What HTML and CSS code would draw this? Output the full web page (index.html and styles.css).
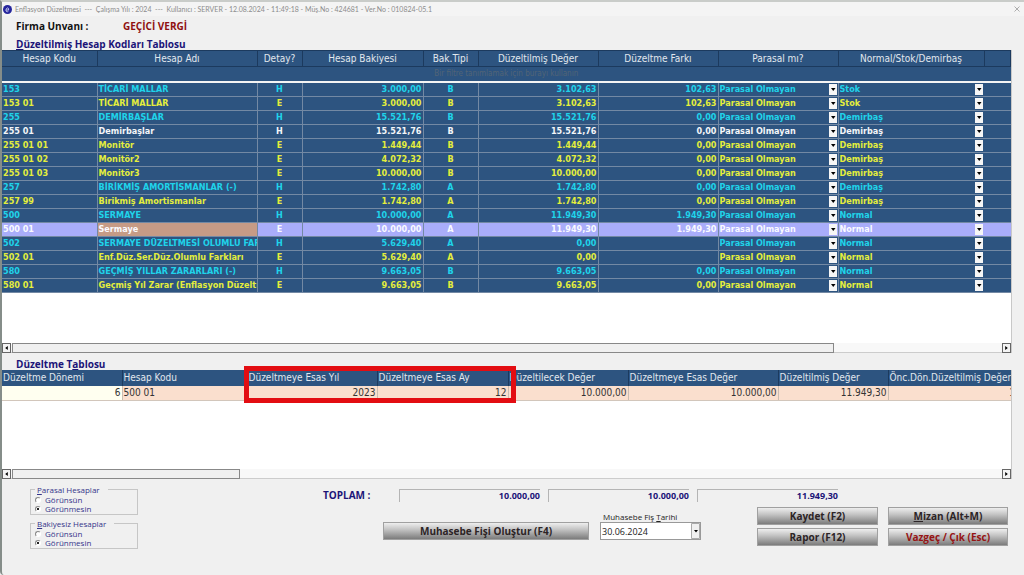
FILE: index.html
```html
<!DOCTYPE html>
<html lang="tr">
<head>
<meta charset="utf-8">
<title>Enflasyon Düzeltmesi</title>
<link rel="stylesheet" href="styles.css">
</head>
<body>
<main class="window">
  <header class="titlebar">
    <svg class="app-icon" viewBox="0 0 18 18" aria-hidden="true"><circle cx="9" cy="9" r="9" fill="#25259c"/><path d="M6 10h5c1-3-1-5-3-4s-3 6-1 7 3 0 4-1" fill="none" stroke="#dfe3ff" stroke-width="1.6"/></svg>
    <span class="titlebar-text">Enflasyon Düzeltmesi &nbsp;---&nbsp; Çalışma Yılı : 2024 &nbsp;---&nbsp; Kullanıcı : SERVER - 12.08.2024 - 11:49:18 - Müş.No : 424681 - Ver.No : 010824-05.1</span>
    <button class="close" aria-label="Kapat"><svg viewBox="0 0 6 6"><path d="M.5 .5l5 5M5.500 .5l-5 5" stroke="#999" stroke-width=".8"/></svg></button>
  </header>
  <div class="firm"><span class="firm-label">Firma Unvanı :</span><span class="firm-name">GEÇİCİ VERGİ</span></div>

  <h2 class="section-title"><u>D</u>üzeltilmiş Hesap Kodları Tablosu</h2>
  <section class="grid-box grid-accounts">
    <table class="accounts">
      <colgroup><col class="w-code"><col class="w-name"><col class="w-detail"><col class="w-balance"><col class="w-type"><col class="w-value"><col class="w-value"><col class="w-value"><col class="w-kind"><col></colgroup>
      <thead>
        <tr><th>Hesap Kodu</th><th>Hesap Adı</th><th>Detay?</th><th>Hesap Bakiyesi</th><th>Bak.Tipi</th><th>Düzeltilmiş Değer</th><th>Düzeltme Farkı</th><th>Parasal mı?</th><th>Normal/Stok/Demirbaş</th><th></th></tr>
        <tr class="filter"><td colspan="10">Bir filtre tanımlamak için burayı kullanın</td></tr>
      </thead>
      <tbody>
        <tr class="main"><td>153</td><td>TİCARİ MALLAR</td><td>H</td><td>3.000,00</td><td>B</td><td>3.102,63</td><td>102,63</td><td><select aria-label="Parasal mı?"><option>Parasal Olmayan</option></select></td><td><select aria-label="Tür"><option>Stok</option></select></td><td></td></tr>
        <tr class="sub"><td>153 01</td><td>TİCARİ MALLAR</td><td>E</td><td>3.000,00</td><td>B</td><td>3.102,63</td><td>102,63</td><td><select aria-label="Parasal mı?"><option>Parasal Olmayan</option></select></td><td><select aria-label="Tür"><option>Stok</option></select></td><td></td></tr>
        <tr class="main"><td>255</td><td>DEMİRBAŞLAR</td><td>H</td><td>15.521,76</td><td>B</td><td>15.521,76</td><td>0,00</td><td><select aria-label="Parasal mı?"><option>Parasal Olmayan</option></select></td><td><select aria-label="Tür"><option>Demirbaş</option></select></td><td></td></tr>
        <tr class="mid"><td>255 01</td><td>Demirbaşlar</td><td>H</td><td>15.521,76</td><td>B</td><td>15.521,76</td><td>0,00</td><td><select aria-label="Parasal mı?"><option>Parasal Olmayan</option></select></td><td><select aria-label="Tür"><option>Demirbaş</option></select></td><td></td></tr>
        <tr class="sub"><td>255 01 01</td><td>Monitör</td><td>E</td><td>1.449,44</td><td>B</td><td>1.449,44</td><td>0,00</td><td><select aria-label="Parasal mı?"><option>Parasal Olmayan</option></select></td><td><select aria-label="Tür"><option>Demirbaş</option></select></td><td></td></tr>
        <tr class="sub"><td>255 01 02</td><td>Monitör2</td><td>E</td><td>4.072,32</td><td>B</td><td>4.072,32</td><td>0,00</td><td><select aria-label="Parasal mı?"><option>Parasal Olmayan</option></select></td><td><select aria-label="Tür"><option>Demirbaş</option></select></td><td></td></tr>
        <tr class="sub"><td>255 01 03</td><td>Monitör3</td><td>E</td><td>10.000,00</td><td>B</td><td>10.000,00</td><td>0,00</td><td><select aria-label="Parasal mı?"><option>Parasal Olmayan</option></select></td><td><select aria-label="Tür"><option>Demirbaş</option></select></td><td></td></tr>
        <tr class="main"><td>257</td><td>BİRİKMİŞ AMORTİSMANLAR (-)</td><td>H</td><td>1.742,80</td><td>A</td><td>1.742,80</td><td>0,00</td><td><select aria-label="Parasal mı?"><option>Parasal Olmayan</option></select></td><td><select aria-label="Tür"><option>Demirbaş</option></select></td><td></td></tr>
        <tr class="sub"><td>257 99</td><td>Birikmiş Amortismanlar</td><td>E</td><td>1.742,80</td><td>A</td><td>1.742,80</td><td>0,00</td><td><select aria-label="Parasal mı?"><option>Parasal Olmayan</option></select></td><td><select aria-label="Tür"><option>Demirbaş</option></select></td><td></td></tr>
        <tr class="main"><td>500</td><td>SERMAYE</td><td>H</td><td>10.000,00</td><td>A</td><td>11.949,30</td><td>1.949,30</td><td><select aria-label="Parasal mı?"><option>Parasal Olmayan</option></select></td><td><select aria-label="Tür"><option>Normal</option></select></td><td></td></tr>
        <tr class="selected"><td>500 01</td><td class="focused">Sermaye</td><td>E</td><td>10.000,00</td><td>A</td><td>11.949,30</td><td>1.949,30</td><td><select aria-label="Parasal mı?"><option>Parasal Olmayan</option></select></td><td><select aria-label="Tür"><option>Normal</option></select></td><td></td></tr>
        <tr class="main"><td>502</td><td>SERMAYE DÜZELTMESİ OLUMLU FARKLARI</td><td>H</td><td>5.629,40</td><td>A</td><td>0,00</td><td></td><td><select aria-label="Parasal mı?"><option>Parasal Olmayan</option></select></td><td><select aria-label="Tür"><option>Normal</option></select></td><td></td></tr>
        <tr class="sub"><td>502 01</td><td>Enf.Düz.Ser.Düz.Olumlu Farkları</td><td>E</td><td>5.629,40</td><td>A</td><td>0,00</td><td></td><td><select aria-label="Parasal mı?"><option>Parasal Olmayan</option></select></td><td><select aria-label="Tür"><option>Normal</option></select></td><td></td></tr>
        <tr class="main"><td>580</td><td>GEÇMİŞ YILLAR ZARARLARI (-)</td><td>H</td><td>9.663,05</td><td>B</td><td>9.663,05</td><td>0,00</td><td><select aria-label="Parasal mı?"><option>Parasal Olmayan</option></select></td><td><select aria-label="Tür"><option>Normal</option></select></td><td></td></tr>
        <tr class="sub"><td>580 01</td><td>Geçmiş Yıl Zarar (Enflasyon Düzeltmesi)</td><td>E</td><td>9.663,05</td><td>B</td><td>9.663,05</td><td>0,00</td><td><select aria-label="Parasal mı?"><option>Parasal Olmayan</option></select></td><td><select aria-label="Tür"><option>Normal</option></select></td><td></td></tr>
      </tbody>
    </table>
    <div class="scrollbar">
      <button class="arrow" aria-label="Sola kaydır"><svg viewBox="0 0 4 6"><path d="M4 0v6L0 3z"/></svg></button>
      <div class="track"><div class="thumb thumb-wide"></div></div>
      <button class="arrow" aria-label="Sağa kaydır"><svg viewBox="0 0 4 6"><path d="M0 0v6l4-3z"/></svg></button>
    </div>
  </section>

  <h2 class="section-title second">Düzeltme T<u>a</u>blosu</h2>
  <section class="grid-box grid-corrections">
    <div class="clip">
      <table class="corrections">
        <colgroup><col class="c-period"><col class="c-code"><col class="c-year"><col class="c-month"><col class="c-source"><col class="c-base"><col class="c-fixed"><col></colgroup>
        <thead><tr><th>Düzeltme Dönemi</th><th>Hesap Kodu</th><th>Düzeltmeye Esas Yıl</th><th>Düzeltmeye Esas Ay</th><th>Düzeltilecek Değer</th><th>Düzeltmeye Esas Değer</th><th>Düzeltilmiş Değer</th><th>Önc.Dön.Düzeltilmiş Değer</th></tr></thead>
        <tbody><tr><td>6</td><td>500 01</td><td>2023</td><td>12</td><td>10.000,00</td><td>10.000,00</td><td>11.949,30</td><td>10.000,00</td></tr></tbody>
      </table>
    </div>
    <div class="highlight"></div>
    <div class="scrollbar">
      <button class="arrow" aria-label="Sola kaydır"><svg viewBox="0 0 4 6"><path d="M4 0v6L0 3z"/></svg></button>
      <div class="track"><div class="thumb thumb-short"></div></div>
      <button class="arrow" aria-label="Sağa kaydır"><svg viewBox="0 0 4 6"><path d="M0 0v6l4-3z"/></svg></button>
    </div>
  </section>

  <footer class="footer">
    <div class="options">
      <fieldset><legend><u>P</u>arasal Hesaplar</legend>
        <label><input type="radio" name="parasal">Görünsün</label>
        <label><input type="radio" name="parasal" checked>Görünmesin</label>
      </fieldset>
      <fieldset><legend><u>B</u>akiyesiz Hesaplar</legend>
        <label><input type="radio" name="bakiye">Görünsün</label>
        <label><input type="radio" name="bakiye" checked>Görünmesin</label>
      </fieldset>
    </div>
    <div class="panel">
      <div class="totals">
        <span class="totals-label">TOPLAM :</span>
        <output>10.000,00</output><output>10.000,00</output><output>11.949,30</output>
      </div>
      <div class="actions">
        <button class="btn create">Muhasebe Fişi Oluştur (F4)</button>
        <div class="date">
          <label for="tarih">Muhasebe Fiş <u>T</u>arihi</label>
          <select id="tarih"><option>30.06.2024</option></select>
        </div>
        <div class="buttons">
          <button class="btn">Kaydet (F2)</button>
          <button class="btn"><u>M</u>izan (Alt+M)</button>
          <button class="btn">Rapor (F12)</button>
          <button class="btn danger">Vazgeç / Çık (Esc)</button>
        </div>
      </div>
    </div>
  </footer>
</main>
</body>
</html>
```
FILE: styles.css
```css
* { box-sizing: border-box; }
body {
  margin: 0;
  background: #f0f0f0;
  color: #222;
  font-family: "Open Sans", "Noto Sans", sans-serif;
  font-size: 9px;
}
button, select, input { font: inherit; color: inherit; margin: 0; }
u { text-underline-offset: 1px; }

.window {
  display: flex;
  flex-direction: column;
  min-height: 100vh;
  border-top: 2px solid #c9ccc9;
  border-left: 2px solid #858d89;
  border-radius: 0 0 0 4px;
  background: #f0f0f0;
}

.titlebar {
  display: flex;
  align-items: center;
  gap: 3px;
  height: 14px;
  padding: 0 4px 0 1px;
  background: #f4f4f4;
  color: #8c8c8c;
  font-family: Lato, "Liberation Sans", sans-serif;
  font-size: 7px;
  line-height: 12px;
}
.app-icon { width: 9px; height: 9px; }
.titlebar-text { flex: 1; white-space: nowrap; }
.close { display: flex; padding: 0; border: 0; background: none; }
.close svg { width: 6px; height: 6px; }

.firm {
  display: flex;
  padding: 3px 14px;
  font-size: 10px;
  line-height: 14px;
  font-weight: 700;
}
.firm-label { width: 107px; color: #111; }
.firm-name { color: #8f1010; }

.section-title {
  margin: 0;
  padding: 1px 14px 0;
  height: 14px;
  color: #1c1478;
  font-size: 10px;
  line-height: 14px;
  font-weight: 700;
}
.section-title.second { height: 17px; padding-top: 4px; }

.grid-box {
  position: relative;
  display: flex;
  flex-direction: column;
  justify-content: space-between;
  margin-right: 12px;
  border-right: 1px solid #c8c8c8;
  background: #fff;
  font-family: "DejaVu Sans Condensed", "DejaVu Sans", sans-serif;
}
.grid-accounts { min-height: 303px; }
.grid-corrections { min-height: 109px; }

table {
  width: 100%;
  table-layout: fixed;
  border-collapse: collapse;
}
th, td {
  padding: 0 1px;
  overflow: hidden;
  white-space: nowrap;
}
th {
  height: 16px;
  border-right: 1px solid #1c3a5e;
  background: #2d5480;
  color: #e2e8ee;
  font-size: 10px;
  line-height: 14px;
  font-weight: 400;
}

.accounts th { border-top: 1px solid #1c3a5e; border-bottom: 1px solid #1c3a5e; }
.accounts td {
  height: 14px;
  border-right: 1px solid #7389a4;
  border-bottom: 1px solid #7389a4;
  font-size: 9px;
  line-height: 12px;
  font-weight: 700;
}
.accounts tbody tr { background: #2d5480; }
.accounts .filter td {
  height: 15px;
  border-right: 0;
  border-bottom: 2px solid #f4f4f4;
  background: #2d5480;
  color: #526476;
  font-size: 8px;
  font-weight: 400;
  text-align: center;
}
.accounts tbody td:nth-child(3), .accounts tbody td:nth-child(5) { text-align: center; }
.accounts tbody td:nth-child(4), .accounts tbody td:nth-child(6), .accounts tbody td:nth-child(7) { text-align: right; }
.accounts tbody td:nth-child(8), .accounts tbody td:nth-child(9) { padding: 0; }
.accounts tbody td:nth-child(9), .accounts tbody td:nth-child(10) { border-right: 0; }
.accounts tbody .main { color: #1fd3ea; }
.accounts tbody .sub { color: #e4ee3c; }
.accounts tbody .mid { color: #f4f6f8; }
.accounts tbody .selected { background: #a9adfa; color: #fafaff; }
.accounts .focused { background: #c69b86; }
.w-code { width: 95px; }
.w-name { width: 160px; }
.w-detail { width: 45px; }
.w-balance { width: 121px; }
.w-type { width: 55px; }
.w-value { width: 120px; }
.w-kind { width: 146px; }

select {
  appearance: none;
  border: 0;
  border-radius: 0;
}
.accounts select {
  display: block;
  width: 100%;
  height: 13px;
  padding: 0 12px 0 1px;
  background: url("data:image/svg+xml,%3Csvg xmlns='http://www.w3.org/2000/svg' width='8' height='11'%3E%3Cpath fill='%23f6f6f6' d='M0 0h8v11H0z'/%3E%3Cpath d='M2 4h4.500L4.250 7z'/%3E%3C/svg%3E") no-repeat right 1px center;
}

.scrollbar { display: flex; height: 10px; background: #f8f8f8; border-bottom: 1px solid #ccc; }
.arrow {
  display: flex;
  align-items: center;
  justify-content: center;
  width: 9px;
  height: 10px;
  padding: 0;
  border: 1px solid #666;
  background: #f4f4f4;
}
.arrow svg { width: 3px; height: 4px; }
.track { flex: 1; padding-left: 1px; }
.thumb { height: 10px; border: 1px solid #888; background: #f0f0f0; }
.thumb-wide { width: 83%; }
.thumb-short { width: 23%; }

.clip { overflow: hidden; }
.corrections { width: calc(100% + 46px); }
.corrections th { text-align: left; }
.corrections td {
  height: 14px;
  border-right: 1px solid #c9bdb2;
  border-bottom: 1px solid #d2c6bb;
  background: #fadfce;
  color: #333;
  font-size: 10px;
  line-height: 13px;
  text-align: right;
}
.corrections td:nth-child(1) { background: #fffff0; }
.corrections td:nth-child(2) { text-align: left; }
.c-period { width: 120px; }
.c-code { width: 125px; }
.c-year { width: 130px; }
.c-month { width: 131px; }
.c-source { width: 120px; }
.c-base { width: 150px; }
.c-fixed { width: 110px; }

/* frame drawn over the year and month columns */
.highlight {
  position: absolute;
  top: -4px;
  left: 242px;
  width: 272px;
  height: 37px;
  border: 5px solid #e30d12;
}

.footer { display: flex; gap: 185px; padding: 5px 16px 0 28px; }
.options { display: flex; flex-direction: column; gap: 3px; width: 108px; flex: none; color: #35358a; }
fieldset {
  display: flex;
  flex-direction: column;
  min-width: 0;
  margin: 0;
  padding: 0 4px 1px;
  border: 1px solid #c6c6c6;
}
legend { padding: 0 8px 0 2px; font-size: 8px; line-height: 11px; }
fieldset label { display: flex; align-items: center; gap: 4px; height: 9px; font-size: 8px; line-height: 9px; }
fieldset input {
  appearance: none;
  width: 6px;
  height: 6px;
  border: 1px solid;
  border-color: #888 #fff #fff #888;
  border-radius: 50%;
  background: #fff;
}
fieldset input:checked { background: radial-gradient(circle, #222 40%, #fff 50%); }

.panel { flex: 1; min-width: 0; }
.totals { display: flex; align-items: center; gap: 8px; padding-top: 4px; color: #1c1478; font-weight: 700; }
.totals-label { width: 68px; font-size: 10px; line-height: 14px; }
.totals output {
  width: 141px;
  height: 13px;
  border-top: 1px solid #b4b4b4;
  border-left: 1px solid #b4b4b4;
  font-size: 9px;
  line-height: 12px;
  text-align: right;
}
.actions { display: flex; align-items: flex-end; padding: 5px 0 0 60px; }
.btn {
  height: 18px;
  padding: 0;
  border: 1px solid #a0a0a0;
  background: linear-gradient(#eee, #c4c4c4 40%, #7c7c7c);
  color: #2c2426;
  font-size: 10px;
  line-height: 14px;
  font-weight: 700;
}
.btn.danger { color: #961414; }
.create { width: 206px; margin-bottom: 6px; }
.date { display: flex; flex-direction: column; width: 101px; margin: 0 56px 6px 11px; }
.date label { padding-left: 3px; font-size: 8px; line-height: 11px; }
.date select {
  height: 18px;
  padding: 0 12px 0 1px;
  border: 1px solid #999;
  background: #fff url("data:image/svg+xml,%3Csvg xmlns='http://www.w3.org/2000/svg' width='9' height='16'%3E%3Cpath fill='%23f0f0f0' stroke='%23aaa' d='M.5 .5h8v15h-8z'/%3E%3Cpath d='M3 7h4L5 9.500z'/%3E%3C/svg%3E") no-repeat right center;
  font-size: 9px;
}
.buttons { display: grid; grid-template-columns: 121px 120px; gap: 3px 10px; }
```
